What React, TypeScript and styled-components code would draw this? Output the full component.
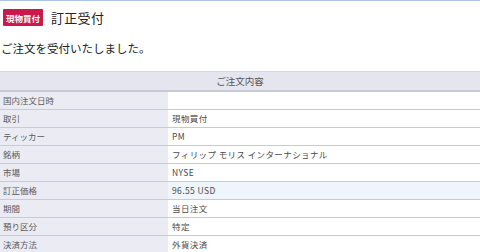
import styled, { createGlobalStyle } from "styled-components";

const GlobalStyle = createGlobalStyle`
    html, body {
        margin: 0;
        padding: 0;
        background: #fff;
        font-family: "Noto Sans CJK JP", "Noto Sans", sans-serif;
    }
`;

const Page = styled.div`
    width: 480px;
    border-top: 1px solid #a9c6e6;
`;

const Heading = styled.div`
    display: flex;
    align-items: center;
    gap: 8px;
    padding: 7px 3px 0;
    height: 19px;
`;

const Badge = styled.span`
    display: inline-flex;
    align-items: center;
    justify-content: center;
    height: 17px;
    padding: 0 3px;
    background-color: #c81a4c;
    color: #fff;
    font-size: 8.5px;
    font-weight: 700;
    border-radius: 1px;
`;

const Title = styled.div`
    font-size: 13px;
    color: #222;
    letter-spacing: 0.3px;
`;

const Message = styled.p`
    margin: 0;
    padding: 13px 1px 0;
    font-size: 11.5px;
    color: #222;
    line-height: 17px;
`;

const Table = styled.table`
    width: 100%;
    margin-top: 14px;
    border-collapse: collapse;
    border-top: 1px solid #d6d7e0;
    font-size: 8.5px;
`;

const HeadCell = styled.th`
    height: 18px;
    padding: 0;
    background-color: #e4e5ef;
    border-bottom: 2px solid #c7c8d3;
    color: #555;
    font-weight: 400;
    font-size: 9.5px;
    text-align: center;
`;

const Row = styled.tr`
    height: 18px;
    border-bottom: 1px solid #c9cad4;
`;

const Label = styled.td`
    width: 165px;
    padding: 0 0 0 3px;
    background-color: #ebebf4;
    color: #5a5a5a;
`;

const Value = styled.td<{ $highlight?: boolean }>`
    padding: 0 0 0 4px;
    background-color: ${(p) => (p.$highlight ? "#eef5fd" : "#fff")};
    color: #4a4a4a;
    letter-spacing: 0.4px;
`;

const rows: { label: string; value: string; highlight?: boolean }[] = [
    { label: "国内注文日時", value: "" },
    { label: "取引", value: "現物買付" },
    { label: "ティッカー", value: "PM" },
    { label: "銘柄", value: "フィリップ モリス インターナショナル" },
    { label: "市場", value: "NYSE" },
    { label: "訂正価格", value: "96.55 USD", highlight: true },
    { label: "期間", value: "当日注文" },
    { label: "預り区分", value: "特定" },
    { label: "決済方法", value: "外貨決済" },
];

const App = () => {
    return (
        <Page>
            <GlobalStyle />
            <Heading>
                <Badge>現物買付</Badge>
                <Title>訂正受付</Title>
            </Heading>
            <Message>ご注文を受付いたしました。</Message>
            <Table>
                <thead>
                    <tr>
                        <HeadCell colSpan={2}>ご注文内容</HeadCell>
                    </tr>
                </thead>
                <tbody>
                    {rows.map((r) => (
                        <Row key={r.label}>
                            <Label>{r.label}</Label>
                            <Value $highlight={r.highlight}>{r.value}</Value>
                        </Row>
                    ))}
                </tbody>
            </Table>
        </Page>
    );
};

export default App;
